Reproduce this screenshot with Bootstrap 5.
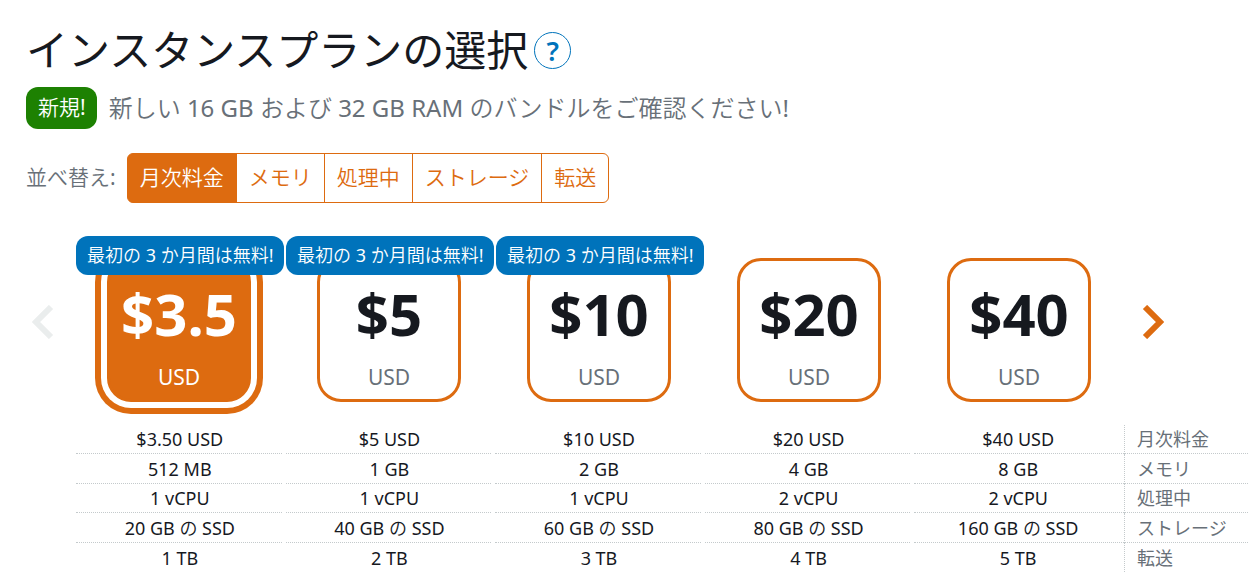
<!DOCTYPE html>
<html lang="ja">
<head>
<meta charset="utf-8">
<meta name="viewport" content="width=device-width, initial-scale=1">
<title>インスタンスプランの選択</title>
<link href="https://cdn.jsdelivr.net/npm/bootstrap@5.3.0/dist/css/bootstrap.min.css" rel="stylesheet">
<style>
:root { --orange:#dd6b10; --ink:#16191f; --muted-ink:#687078; --blue:#0073bb; }
body { font-family:"Noto Sans","Noto Sans CJK JP DemiLight","Noto Sans CJK JP",sans-serif; font-size:21px; color:var(--ink); background:#fff; }
.intro { padding:20px 26px 0; }
.page-title { font-family:"Noto Sans CJK JP",sans-serif; font-size:42px; line-height:55px; padding-bottom:4px; font-weight:400; }
.help { width:37px; height:37px; border:1px solid var(--blue); color:var(--blue); font-size:27px; line-height:35px; font-weight:600; margin:2px 0 0 6px; }
.new-tag { background:#1d8102; font-size:21px; line-height:26px; padding:7px 11px 9px 12px; border-radius:12px; }
.lede { font-size:24px; line-height:42px; color:var(--muted-ink); }
.soft { color:var(--muted-ink); }
.sort { margin-left:11px; }
.sort .btn { --bs-btn-color:var(--orange); --bs-btn-border-color:var(--orange); --bs-btn-hover-color:#fff; --bs-btn-hover-bg:var(--orange); --bs-btn-hover-border-color:var(--orange); --bs-btn-active-color:#fff; --bs-btn-active-bg:var(--orange); --bs-btn-active-border-color:var(--orange); --bs-btn-font-size:21px; --bs-btn-line-height:32px; --bs-btn-padding-x:12px; --bs-btn-border-radius:6px; padding-top:7px; padding-bottom:9px; }
.plans { margin-top:33px; }
.arrow { border:0; background:none; padding:6px 0 0; height:166px; }
.arrow svg { display:block; }
.arrow-prev { width:76px; padding-left:32px; }
.arrow-next { width:122px; padding-left:16px; }
.plan { flex:1 1 0; min-width:0; padding-top:22px; }
.promo { top:0; left:0; right:2px; background:var(--blue); color:#fff; font-size:18px; line-height:27px; padding:6px 0 6px 11px; border-radius:12px; z-index:1; white-space:nowrap; }
.tile { width:144px; height:144px; margin-right:4px; border:3px solid var(--orange); border-radius:24px; cursor:pointer; padding-top:17px; }
.tile b { font-size:58px; line-height:72px; }
.tile small { font-size:21px; line-height:30px; margin-top:12px; color:var(--muted-ink); }
.btn-check:checked + .tile { background:var(--orange); color:#fff; box-shadow:0 0 0 6px #fff,0 0 0 12px var(--orange); }
.btn-check:checked + .tile small { color:#fff; }
.specs-wrap { padding:23px 0 12px 76px; }
.specs { table-layout:fixed; width:100%; border-collapse:separate; border-spacing:0; font-size:18px; line-height:28px; }
.specs tr { height:29px; }
.specs tr:nth-child(even) { height:30px; }
.specs td, .specs th { padding:0; border-bottom:1px dotted #c4cacc; }
.specs td { position:relative; text-align:center; padding-right:2px; }
.specs td:not(:nth-child(5))::after { content:""; position:absolute; right:0; bottom:-1px; width:3px; height:1px; background:#fff; }
.specs th { font-family:"Noto Sans CJK JP",sans-serif; font-weight:400; line-height:26px; padding:0 0 2px 12px; color:var(--muted-ink); border-left:1px dotted #c4cacc; }
.specs tr:last-child > * { border-bottom:0; }
.labels-col { width:124px; }
</style>
</head>
<body>
<header class="intro">
  <div class="d-flex align-items-center">
    <h1 class="page-title m-0">インスタンスプランの選択</h1>
    <a href="#help" class="help rounded-circle text-center text-decoration-none" aria-label="ヘルプ">?</a>
  </div>
  <div class="d-flex align-items-center mt-2 pb-4">
    <span class="new-tag text-white">新規!</span>
    <p class="lede m-0 ms-2 ps-1">新しい 16 GB および 32 GB RAM のバンドルをご確認ください!</p>
  </div>
  <div class="d-flex align-items-center">
    <span class="soft" id="sortLabel">並べ替え:</span>
    <div class="btn-group sort" role="group" aria-labelledby="sortLabel">
      <button type="button" class="btn active">月次料金</button>
      <button type="button" class="btn">メモリ</button>
      <button type="button" class="btn">処理中</button>
      <button type="button" class="btn">ストレージ</button>
      <button type="button" class="btn">転送</button>
    </div>
  </div>
</header>
<main>
  <div class="plans d-flex">
    <button type="button" class="arrow arrow-prev text-start" disabled aria-label="前へ"><svg width="22" height="34" viewBox="0 0 22 34" fill="none" stroke="#eaeded" stroke-width="6"><path d="M19 2 4 17l15 15"/></svg></button>
    <div class="plan position-relative d-flex justify-content-center">
      <span class="promo position-absolute">最初の 3 か月間は無料!</span>
      <input class="btn-check" type="radio" name="plan" id="p3" checked>
      <label class="tile d-flex flex-column text-center" for="p3"><b>$3.5</b><small>USD</small></label>
    </div>
    <div class="plan position-relative d-flex justify-content-center">
      <span class="promo position-absolute">最初の 3 か月間は無料!</span>
      <input class="btn-check" type="radio" name="plan" id="p5">
      <label class="tile d-flex flex-column text-center" for="p5"><b>$5</b><small>USD</small></label>
    </div>
    <div class="plan position-relative d-flex justify-content-center">
      <span class="promo position-absolute">最初の 3 か月間は無料!</span>
      <input class="btn-check" type="radio" name="plan" id="p10">
      <label class="tile d-flex flex-column text-center" for="p10"><b>$10</b><small>USD</small></label>
    </div>
    <div class="plan position-relative d-flex justify-content-center">
      <input class="btn-check" type="radio" name="plan" id="p20">
      <label class="tile d-flex flex-column text-center" for="p20"><b>$20</b><small>USD</small></label>
    </div>
    <div class="plan position-relative d-flex justify-content-center">
      <input class="btn-check" type="radio" name="plan" id="p40">
      <label class="tile d-flex flex-column text-center" for="p40"><b>$40</b><small>USD</small></label>
    </div>
    <button type="button" class="arrow arrow-next text-start" aria-label="次へ"><svg width="22" height="34" viewBox="0 0 22 34" fill="none" stroke="#dd6b10" stroke-width="6"><path d="M3 2l15 15L3 32"/></svg></button>
  </div>
  <div class="specs-wrap">
    <table class="specs">
      <colgroup><col span="5"><col class="labels-col"></colgroup>
      <tbody>
        <tr><td>$3.50 USD</td><td>$5 USD</td><td>$10 USD</td><td>$20 USD</td><td>$40 USD</td><th scope="row">月次料金</th></tr>
        <tr><td>512 MB</td><td>1 GB</td><td>2 GB</td><td>4 GB</td><td>8 GB</td><th scope="row">メモリ</th></tr>
        <tr><td>1 vCPU</td><td>1 vCPU</td><td>1 vCPU</td><td>2 vCPU</td><td>2 vCPU</td><th scope="row">処理中</th></tr>
        <tr><td>20 GB の SSD</td><td>40 GB の SSD</td><td>60 GB の SSD</td><td>80 GB の SSD</td><td>160 GB の SSD</td><th scope="row">ストレージ</th></tr>
        <tr><td>1 TB</td><td>2 TB</td><td>3 TB</td><td>4 TB</td><td>5 TB</td><th scope="row">転送</th></tr>
      </tbody>
    </table>
  </div>
</main>
<script src="https://cdn.jsdelivr.net/npm/bootstrap@5.3.0/dist/js/bootstrap.bundle.min.js"></script>
</body>
</html>
